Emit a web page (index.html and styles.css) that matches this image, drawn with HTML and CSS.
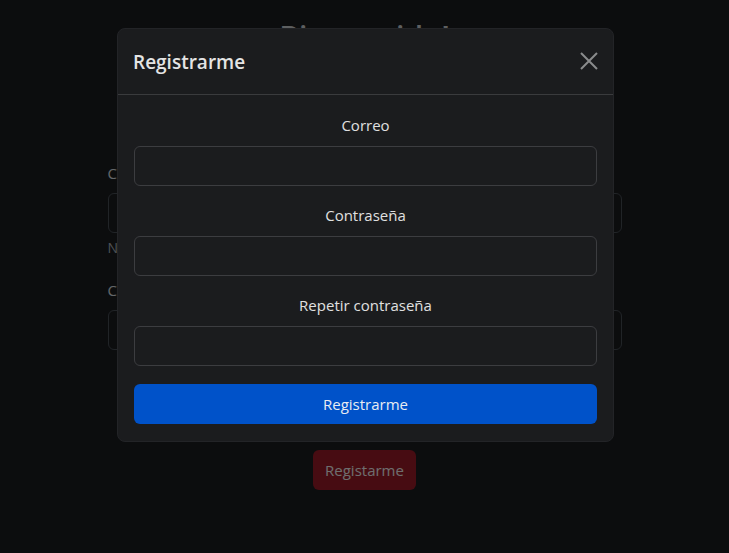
FILE: index.html
```html
<!DOCTYPE html>
<html lang="es">
<head>
<meta charset="utf-8">
<title>Registro</title>
<link rel="stylesheet" href="styles.css">
</head>
<body>
<main class="page">
  <h1 class="page-title">Bienvenido!</h1>
  <form class="page-form">
    <label class="page-label">Correo electrónico</label>
    <input class="page-input" type="email">
    <div class="page-hint">Nunca compartiremos tu correo con nadie.</div>
    <label class="page-label page-label-second">Contraseña</label>
    <input class="page-input" type="password">
    <div class="page-actions">
      <button type="button" class="btn-red">Registarme</button>
    </div>
  </form>
</main>

<div class="backdrop"></div>

<div class="modal">
  <div class="modal-header">
    <h2 class="modal-title">Registrarme</h2>
    <button type="button" class="btn-close" aria-label="Cerrar">
      <svg width="18" height="18" viewBox="0 0 18 18"><path d="M1 1 L17 17 M17 1 L1 17" stroke="currentColor" stroke-width="2" fill="none"/></svg>
    </button>
  </div>
  <div class="modal-body">
    <div class="field">
      <label class="field-label">Correo</label>
      <input class="field-input" type="email">
    </div>
    <div class="field">
      <label class="field-label">Contraseña</label>
      <input class="field-input" type="password">
    </div>
    <div class="field">
      <label class="field-label">Repetir contraseña</label>
      <input class="field-input" type="password">
    </div>
    <button type="button" class="btn-blue">Registrarme</button>
  </div>
</div>
</body>
</html>
```

FILE: styles.css
```css
* { box-sizing: border-box; }
html, body { margin: 0; height: 100%; }
body {
  background: #1c1e20;
  color: #dee2e6;
  font-family: "Open Sans", "Noto Sans", sans-serif;
  font-size: 15px;
  line-height: 24px;
  overflow: hidden;
}
.page {
  width: 514px;
  margin: 0 auto;
  padding-top: 19px;
}
.page-title {
  margin: 0;
  text-align: center;
  font-size: 30px;
  font-weight: 600;
  line-height: 36px;
  color: #d0d4d8;
}
.page-form {
  display: flex;
  flex-direction: column;
  margin-top: 106px;
}
.page-label { margin-bottom: 8px; color: #dee2e6; }
.page-label-second { margin-top: 20px; }
.page-input {
  height: 40px;
  background: #1c1e20;
  border: 1px solid #495057;
  border-radius: 6px;
}
.page-hint { margin-top: 4px; font-size: 14px; line-height: 21px; color: #adb5bd; }
.page-actions { display: flex; justify-content: center; margin-top: 100px; }
.btn-red {
  height: 40px;
  padding: 0 12px;
  background: #9e1b28;
  color: #f4f4f4;
  border: none;
  border-radius: 6px;
  font: inherit;
}
.backdrop {
  position: fixed;
  inset: 0;
  background: rgba(0, 0, 0, 0.55);
}
.modal {
  position: fixed;
  top: 28px;
  left: 117px;
  width: 497px;
  background: #1b1c1e;
  border: 1px solid #232427;
  border-radius: 8px;
}
.modal-header {
  height: 66px;
  display: flex;
  align-items: center;
  justify-content: space-between;
  padding: 0 15px 0 15px;
  border-bottom: 1px solid #3a3b3d;
}
.modal-title {
  margin: 0;
  font-size: 19px;
  font-weight: 600;
  color: #e4e4e4;
}
.btn-close {
  display: flex;
  background: none;
  border: none;
  padding: 0;
  color: #8a8b8c;
  margin-top: -2px;
}
.modal-body {
  display: flex;
  flex-direction: column;
  gap: 17px;
  padding: 18px 16px 17px;
}
.field { display: flex; flex-direction: column; }
.field-label {
  text-align: center;
  margin-bottom: 9px;
  color: #e0e0e0;
}
.field-input {
  height: 40px;
  background: #1b1c1e;
  border: 1px solid #3c3d40;
  border-radius: 6px;
}
.btn-blue {
  height: 40px;
  margin-top: 1px;
  background: #0052c9;
  color: #e8ecf2;
  border: none;
  border-radius: 6px;
  font: inherit;
}
```
